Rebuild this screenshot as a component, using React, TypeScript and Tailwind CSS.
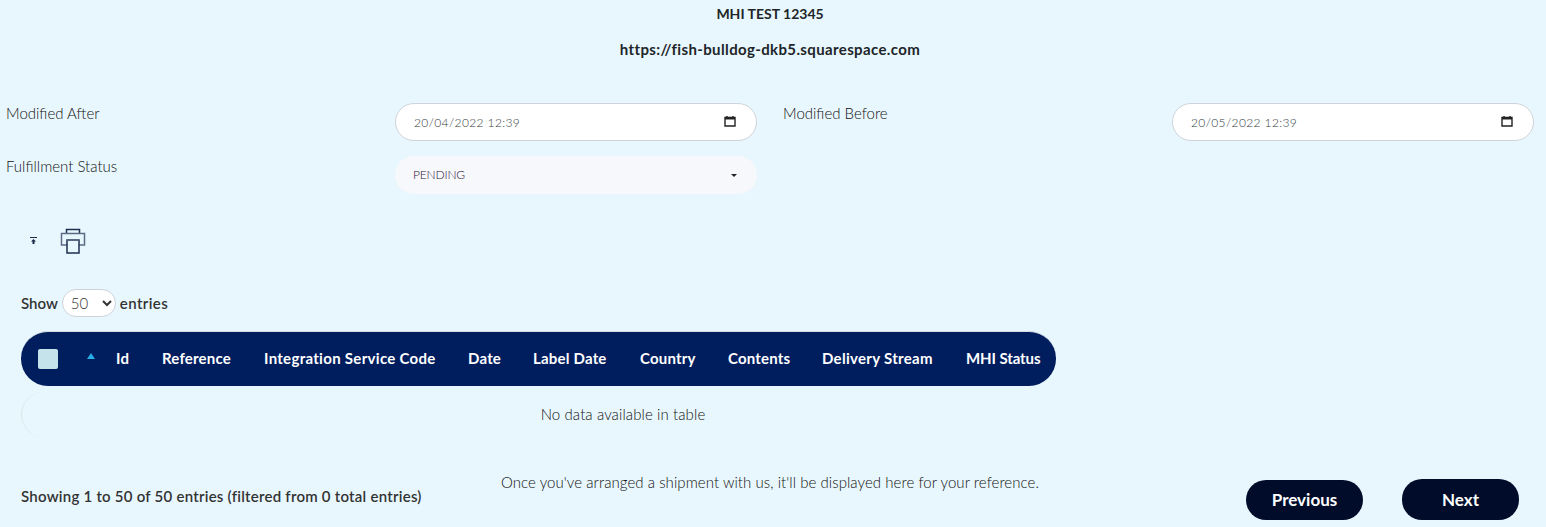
const columns = [
  { label: 'Id', width: 'w-[46px]', extra: '' },
  { label: 'Reference', width: 'w-[102px]', extra: '' },
  { label: 'Integration Service Code', width: 'w-[204px]', extra: 'tracking-[0.3px]' },
  { label: 'Date', width: 'w-[65px]', extra: '' },
  { label: 'Label Date', width: 'w-[107px]', extra: '' },
  { label: 'Country', width: 'w-[88px]', extra: '' },
  { label: 'Contents', width: 'w-[94px]', extra: '' },
  { label: 'Delivery Stream', width: 'w-[144px]', extra: 'tracking-[0.3px]' },
  { label: 'MHI Status', width: 'w-[90px]', extra: 'tracking-[-0.1px]' },
]

function CalendarIcon() {
  return (
    <svg width="12" height="12" viewBox="0 0 12 12" className="mb-[2px] text-[#222]">
      <path d="M1 2.5h10v8.5H1z M3 1v2 M9 1v2" fill="none" stroke="currentColor" strokeWidth="1.4" />
      <path d="M1 2h10v2.5H1z" fill="currentColor" />
    </svg>
  )
}

function DateField({ value }: { value: string }) {
  return (
    <div className="flex h-[38px] items-center justify-between rounded-[19px] border border-[#ced4da] bg-white pl-[18px] pr-[20px] text-[12px] font-light tracking-[0.38px] text-[#333b42]">
      <span className="pt-[1px]">{value}</span>
      <CalendarIcon />
    </div>
  )
}

function PrintIcon() {
  return (
    <svg width="26" height="26" viewBox="0 0 26 26" fill="none" strokeWidth="1.5">
      <path d="M6.5 5V1.5h13V5" stroke="#1f2f4f" />
      <path d="M7 17H1.5V5.5h23V17H19" stroke="#5b6b85" />
      <path d="M7 12h12v13H7z" stroke="#1f2f4f" />
      <path d="M7 12h12" stroke="#5b6b85" />
    </svg>
  )
}

export default function App() {
  return (
    <div className="h-[527px] w-[1546px] overflow-hidden bg-[#e8f7fd] font-['Lato','Liberation_Sans',sans-serif] text-[#212529]">
      <div className="w-[1540px] pt-[5px] text-center font-bold leading-[18px]">
        <p className="text-[14px]">MHI TEST 12345</p>
        <p className="mt-[17px] text-[15px] tracking-[0.37px]">https://fish-bulldog-dkb5.squarespace.com</p>
      </div>

      <div className="mt-[45px] grid grid-cols-[389px_362px_26px_389px_362px] px-[6px] text-[15px] font-light text-[#111]">
        <label className="leading-[20px]">Modified After</label>
        <DateField value="20/04/2022 12:39" />
        <span />
        <label className="leading-[20px]">Modified Before</label>
        <DateField value="20/05/2022 12:39" />

        <label className="mt-[15px] leading-[20px]">Fulfillment Status</label>
        <div className="mt-[15px] flex h-[38px] items-center justify-between rounded-[19px] bg-[#f6f8fb] pl-[18px] pr-[20px] text-[12px] tracking-[-0.15px] text-[#2a1038]">
          <span>PENDING</span>
          <span className="h-0 w-0 border-x-[3px] border-t-[3px] border-x-transparent border-t-[#222]" />
        </div>
      </div>

      <div className="mt-[34px] flex items-center pl-[30px]">
        <svg width="8" height="8" viewBox="0 0 8 8" fill="#1a2a4a">
          <path d="M0 0h7v1H0zM3.5 2L6 4.5H4.5V7h-2V4.5H1z" />
        </svg>
        <span className="ml-[22px] flex">
          <PrintIcon />
        </span>
      </div>

      <div className="mt-[35px] flex items-center pl-[21px] text-[15px] font-semibold text-[#333]">
        <span>Show</span>
        <select className="mx-[4px] h-[28px] w-[54px] rounded-[14px] border border-[#ced4da] bg-white pl-[4px] text-[15px] font-light">
          <option>50</option>
        </select>
        <span className="tracking-[0.4px]">entries</span>
      </div>

      <div className="ml-[21px] mt-[14px] w-[1035px]">
        <div className="flex h-[55px] items-center rounded-[27px] border-t border-[#d5dde3] bg-[#001e5e] pb-[1px] text-[15px] font-bold tracking-[0.2px] text-white">
          <span className="ml-[17px] h-[20px] w-[20px] rounded-[2px] bg-[#c5e3ea]" />
          <span className="ml-[29px] mb-[6px] mr-[21px] h-0 w-0 border-x-[4px] border-b-[6px] border-x-transparent border-b-[#29aee6]" />
          {columns.map((col) => (
            <span key={col.label} className={`${col.width} ${col.extra} shrink-0 whitespace-nowrap`}>
              {col.label}
            </span>
          ))}
        </div>
        <div className="mt-[6px] flex h-[45px] items-center justify-center rounded-l-[24px] border-l border-[#dce6ea] pl-[168px] text-[15px] font-light tracking-[0.1px] text-[#111]">
          No data available in table
        </div>
      </div>

      <div className="mt-[33px] flex pl-[21px] pr-[27px]">
        <p className="mt-[16px] w-[480px] text-[15px] font-semibold leading-[20px] tracking-[0.24px] text-[#333]">
          Showing 1 to 50 of 50 entries (filtered from 0 total entries)
        </p>
        <p className="w-[745px] pt-[2px] text-[15px] font-light leading-[20px] tracking-[0.06px] text-[#111]">
          Once you've arranged a shipment with us, it'll be displayed here for your reference.
        </p>
        <div className="mt-[9px] flex items-start">
          <button className="mt-[1px] h-[40px] w-[117px] rounded-[20px] bg-[#000c2a] text-[17px] font-bold text-white">Previous</button>
          <button className="ml-[39px] h-[41px] w-[117px] rounded-[20px] bg-[#000c2a] text-[17px] font-bold text-white">Next</button>
        </div>
      </div>
    </div>
  )
}
